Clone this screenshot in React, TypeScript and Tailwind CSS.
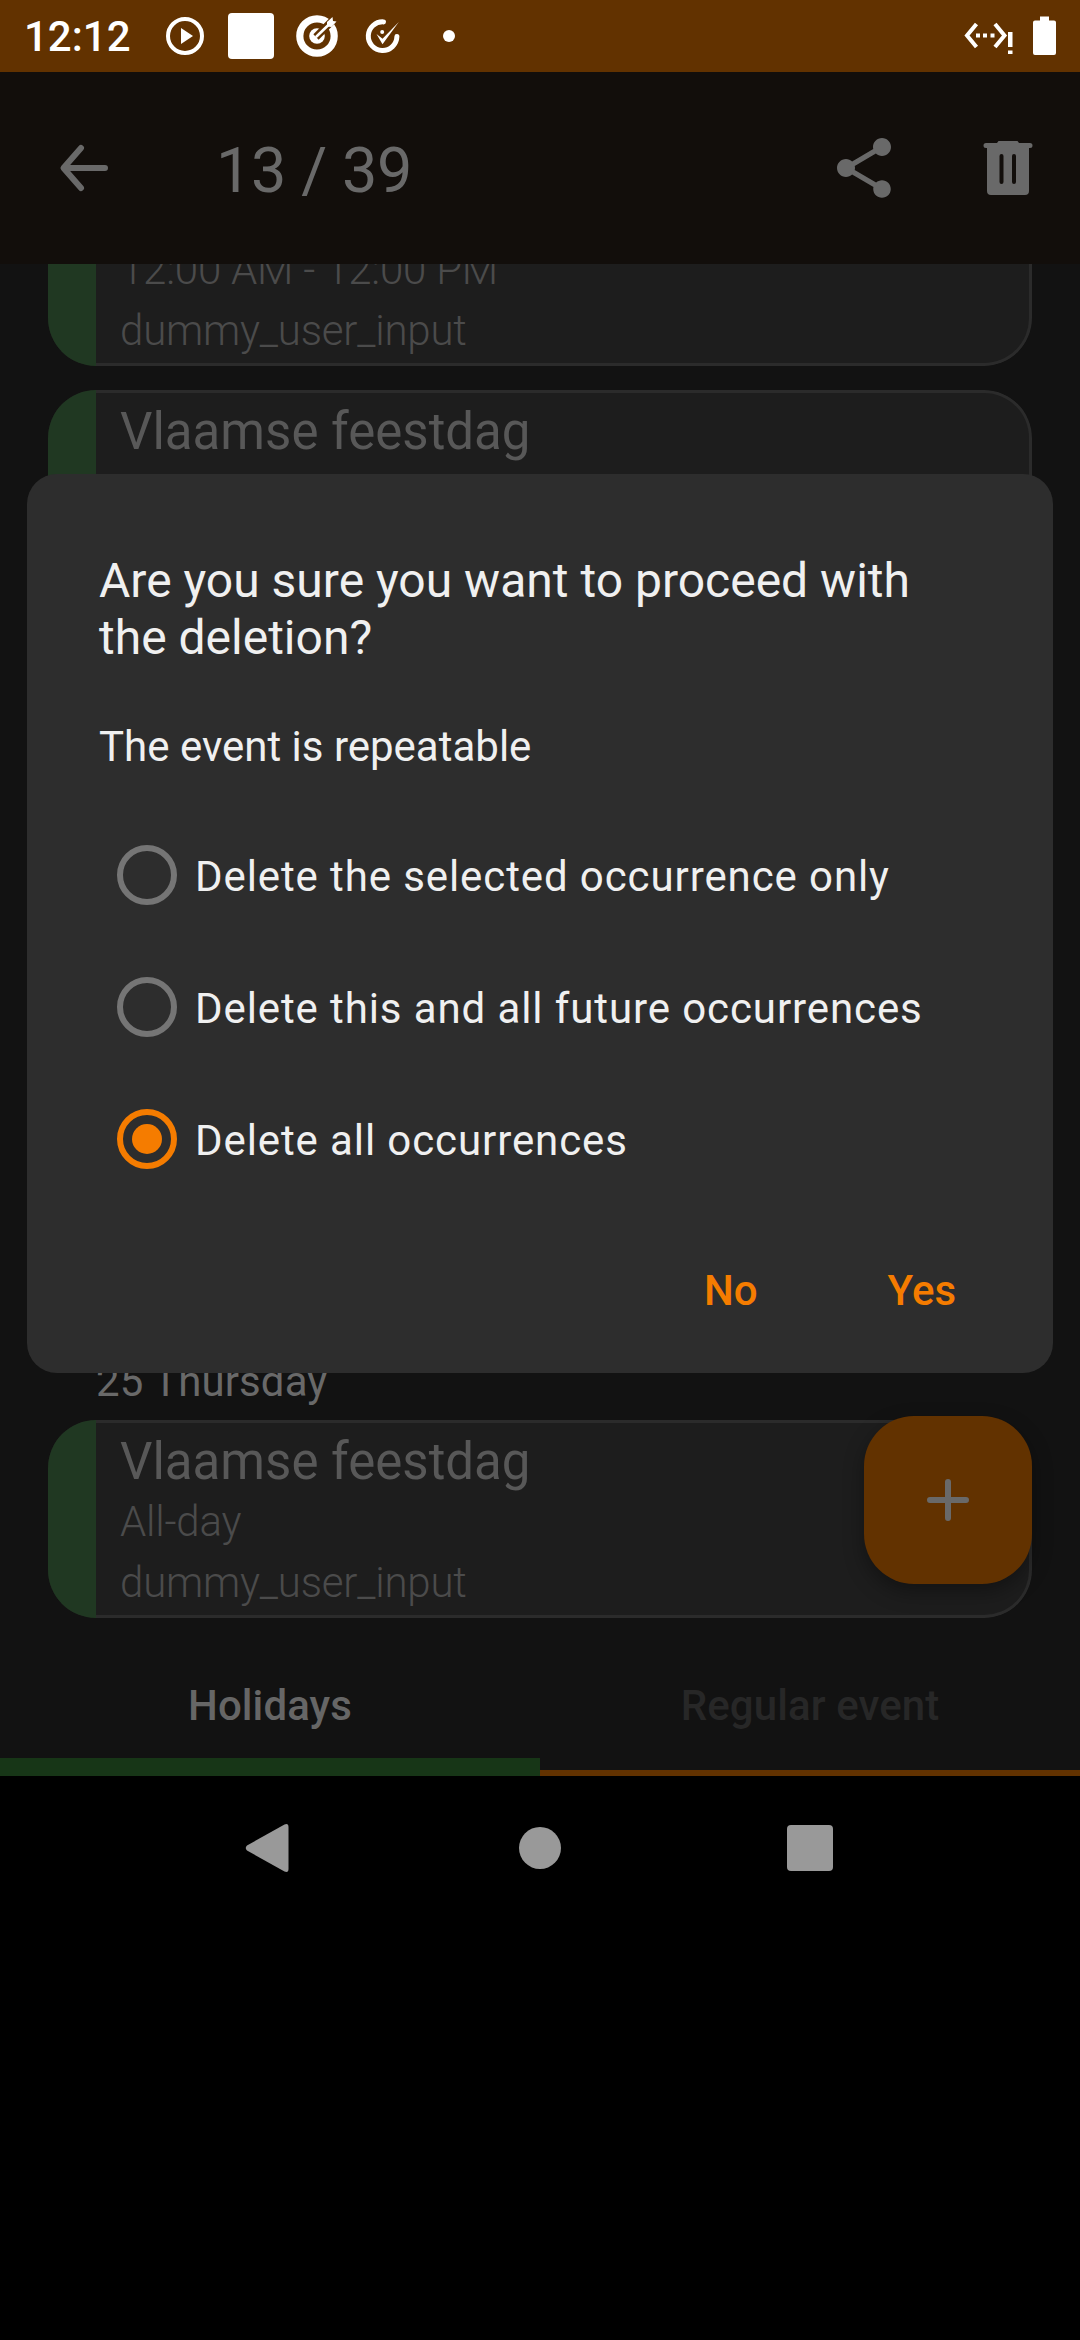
import React from "react";

function StatusBar() {
  return (
    <div className="flex h-[72px] shrink-0 items-center bg-[#623200] text-white">
      <span className="ml-[24px] w-[137px] whitespace-nowrap pt-[2px] text-[42px] font-medium leading-[72px]">12:12</span>
      <svg className="ml-[5px] h-[38px] w-[38px]" viewBox="0 0 38 38">
        <circle cx="19" cy="19" r="17" fill="none" stroke="currentColor" strokeWidth="4" />
        <path d="M15 11v16l12-8z" fill="currentColor" />
      </svg>
      <div className="ml-[24px] h-[46px] w-[46px] rounded-[4px] bg-white" />
      <svg className="ml-[20px] h-[46px] w-[46px]" viewBox="0 0 46 46">
        <circle cx="23" cy="23" r="17.2" fill="none" stroke="currentColor" strokeWidth="7.2" />
        <circle cx="23" cy="23" r="7.800" fill="currentColor" />
        <path d="M22 24L42 4" stroke="#623200" strokeWidth="7.500" />
        <path d="M22.500 23.500L37 9.500" stroke="currentColor" strokeWidth="2.600" strokeLinecap="round" />
        <path d="M33 13.500V9l5.500-5 .5 4 3.500.5-5 5.500z" fill="currentColor" />
      </svg>
      <svg className="ml-[20px] h-[46px] w-[46px]" viewBox="0 0 46 46">
        <path d="M23.500 8.900A14.300 14.300 0 1 0 36.900 23.500" fill="none" stroke="currentColor" strokeWidth="5" strokeLinecap="round" />
        <path d="M16.500 21l6 10.300L38.800 9 22.500 25.700z" fill="currentColor" />
        <circle cx="22.200" cy="19" r="2" fill="currentColor" />
      </svg>
      <div className="ml-[37px] h-[12px] w-[12px] rounded-full bg-white" />
      <svg className="ml-auto h-[36px] w-[50px]" viewBox="0 0 50 36">
        <path d="M12.500 6L3 17.500 12.500 29M31 6l9.500 11.500L31 29" fill="none" stroke="currentColor" strokeWidth="4" />
        <path d="M12 15.500h4v4h-4zM19 15.500h4v4h-4zM26.500 15.500h4v4h-4zM44 14h4.500v15H44zM44 32.500h4.500v3.500H44z" fill="currentColor" />
      </svg>
      <svg className="ml-[19px] mr-[24px] h-[40px] w-[23px]" viewBox="0 0 23 40">
        <path d="M7 0.500h9v4h5a2 2 0 0 1 2 2v30.500a2 2 0 0 1-2 2H2a2 2 0 0 1-2-2V6.500a2 2 0 0 1 2-2h5z" fill="currentColor" />
      </svg>
    </div>
  );
}

function AppBar() {
  return (
    <header className="flex h-[192px] shrink-0 items-center bg-[#120e0b] text-[#696969]">
      <svg className="ml-[48px] h-[72px] w-[72px]" viewBox="0 0 72 72">
        <path d="M57 36H16M33 16L15.500 36 33 56" fill="none" stroke="currentColor" strokeWidth="6" strokeLinecap="round" strokeLinejoin="round" />
      </svg>
      <h1 className="ml-[96px] whitespace-nowrap pt-[4px] text-[63px] font-normal leading-[75px] tracking-[-0.4px]">13 / 39</h1>
      <svg className="ml-auto h-[72px] w-[72px]" viewBox="0 0 24 24" fill="currentColor">
        <path d="M18 16.080c-.76 0-1.440.3-1.960.77L8.910 12.700c.05-.23.09-.46.09-.7s-.04-.47-.09-.7l7.050-4.110c.54.5 1.250.81 2.040.81 1.660 0 3-1.340 3-3s-1.340-3-3-3-3 1.340-3 3c0 .24.04.47.09.7L8.040 9.810C7.500 9.310 6.790 9 6 9c-1.660 0-3 1.340-3 3s1.340 3 3 3c.79 0 1.500-.31 2.040-.81l7.120 4.160c-.05.21-.08.43-.08.65 0 1.610 1.310 2.920 2.920 2.920s2.920-1.310 2.920-2.920-1.310-2.920-2.920-2.920z" />
      </svg>
      <svg className="ml-[72px] mr-[36px] h-[72px] w-[72px]" viewBox="0 0 72 72">
        <path fillRule="evenodd" d="M14 11h11l1.500-2h19l1.500 2h11a2 2 0 0 1 0 5h-1v43a4 4 0 0 1-4 4H19a4 4 0 0 1-4-4V16h-1a2 2 0 0 1 0-5zM29.500 22a2 2 0 0 0-2 2v26a2 2 0 0 0 4 0V24a2 2 0 0 0-2-2zM42 22a2 2 0 0 0-2 2v26a2 2 0 0 0 4 0V24a2 2 0 0 0-2-2z" fill="currentColor" />
      </svg>
    </header>
  );
}

function EventCard({ title, time, place }: { title?: string; time: string; place: string }) {
  return (
    <article className="mx-[48px] flex h-[198px] shrink-0 overflow-hidden rounded-[48px] bg-[#1d1d1d]">
      <div className="w-[48px] bg-[#203822]" />
      <div className="min-w-0 flex-1 rounded-r-[48px] border-y-[3px] border-r-[3px] border-[#2b2b2b] pl-[24px]">
        <h2 className="h-[67px] whitespace-nowrap pt-[9px] text-[51px] font-normal leading-[60px] text-[#585858]">{title}</h2>
        <p className="mt-[7px] whitespace-nowrap text-[42px] font-light leading-[50px] tracking-[-0.2px] text-[#4b4b4b]">{time}</p>
        <p className="mt-[11px] whitespace-nowrap text-[42px] font-light leading-[50px] tracking-[-0.2px] text-[#4b4b4b]">{place}</p>
      </div>
    </article>
  );
}

const options = [
  { label: "Delete the selected occurrence only", selected: false },
  { label: "Delete this and all future occurrences", selected: false },
  { label: "Delete all occurrences", selected: true },
];

function DeleteDialog() {
  return (
    <div role="dialog" className="absolute left-[27px] top-[474px] flex h-[899px] w-[1026px] flex-col rounded-[30px] bg-[#2d2d2d] text-[#f0f0f0]">
      <h2 className="ml-[72px] mt-[78px] h-[114px] whitespace-nowrap text-[48px] font-normal leading-[57px]">
        Are you sure you want to proceed with
        <br />
        the deletion?
      </h2>
      <p className="ml-[72px] mt-[56px] text-[42px] leading-[50px]">The event is repeatable</p>
      <div className="mt-[37px] flex flex-col">
        {options.map((o) => (
          <label key={o.label} className="flex h-[132px] items-center pl-[90px]">
            <span className={o.selected ? "flex h-[60px] w-[60px] items-center justify-center rounded-full border-[6px] border-[#f57c00]" : "h-[60px] w-[60px] rounded-full border-[6px] border-[#757575]"}>
              {o.selected && <span className="h-[30px] w-[30px] rounded-full bg-[#f57c00]" />}
            </span>
            <span className="ml-[18px] whitespace-nowrap pt-[4px] text-[42px] leading-[50px] tracking-[0.9px]">{o.label}</span>
          </label>
        ))}
      </div>
      <div className="mt-[61px] flex justify-end text-[42px] font-medium leading-[50px] text-[#f57c00]">
        <button className="mr-[130px]">No</button>
        <button className="mr-[97px]">Yes</button>
      </div>
    </div>
  );
}

export default function App() {
  return (
    <div className="relative flex h-[2340px] w-[1080px] flex-col overflow-hidden bg-black font-['Roboto',sans-serif]">
      <StatusBar />
      <AppBar />
      <main className="flex h-[1386px] shrink-0 flex-col overflow-hidden bg-[#121212]">
        <div className="-mt-[96px] flex flex-col">
          <EventCard time="12:00 AM - 12:00 PM" place="dummy_user_input" />
          <div className="h-[24px]" />
          <EventCard title="Vlaamse feestdag" time="" place="" />
          <p className="ml-[96px] mt-[769px] h-[63px] whitespace-nowrap text-[42px] leading-[50px] tracking-[0.1px] text-[#696969]">25 Thursday</p>
          <EventCard title="Vlaamse feestdag" time="All-day" place="dummy_user_input" />
        </div>
      </main>
      <nav className="flex h-[126px] shrink-0 bg-[#121212] text-center text-[42px] font-medium leading-[50px]">
        <div className="w-1/2 border-b-[18px] border-[#173617] pt-[31px] tracking-[0.1px] text-[#666666]">Holidays</div>
        <div className="w-1/2 border-b-[6px] border-[#623200] pt-[31px] tracking-[0.1px] text-[#272727]">Regular event</div>
      </nav>
      <div className="flex h-[144px] shrink-0 items-center text-[#999999]">
        <svg className="ml-[245px] h-[50px] w-[44px]" viewBox="0 0 44 50" fill="currentColor">
          <path d="M2 22.500L39.500 1.500Q43.500 0 43.500 4V46Q43.500 50 39.500 48.500L2 27.500Q-.5 25 2 22.500z" />
        </svg>
        <div className="ml-[230px] h-[42px] w-[42px] rounded-full bg-[#999999]" />
        <div className="ml-[226px] h-[46px] w-[46px] rounded-[4px] bg-[#999999]" />
      </div>
      <button className="absolute left-[864px] top-[1416px] flex h-[168px] w-[168px] items-center justify-center rounded-[50px] bg-[#623200] shadow-[0_8px_20px_rgba(0,0,0,0.35)]">
        <svg className="h-[48px] w-[48px]" viewBox="0 0 48 48">
          <path d="M24 6v36M6 24h36" stroke="#696969" strokeWidth="6" strokeLinecap="round" />
        </svg>
      </button>
      <DeleteDialog />
    </div>
  );
}
